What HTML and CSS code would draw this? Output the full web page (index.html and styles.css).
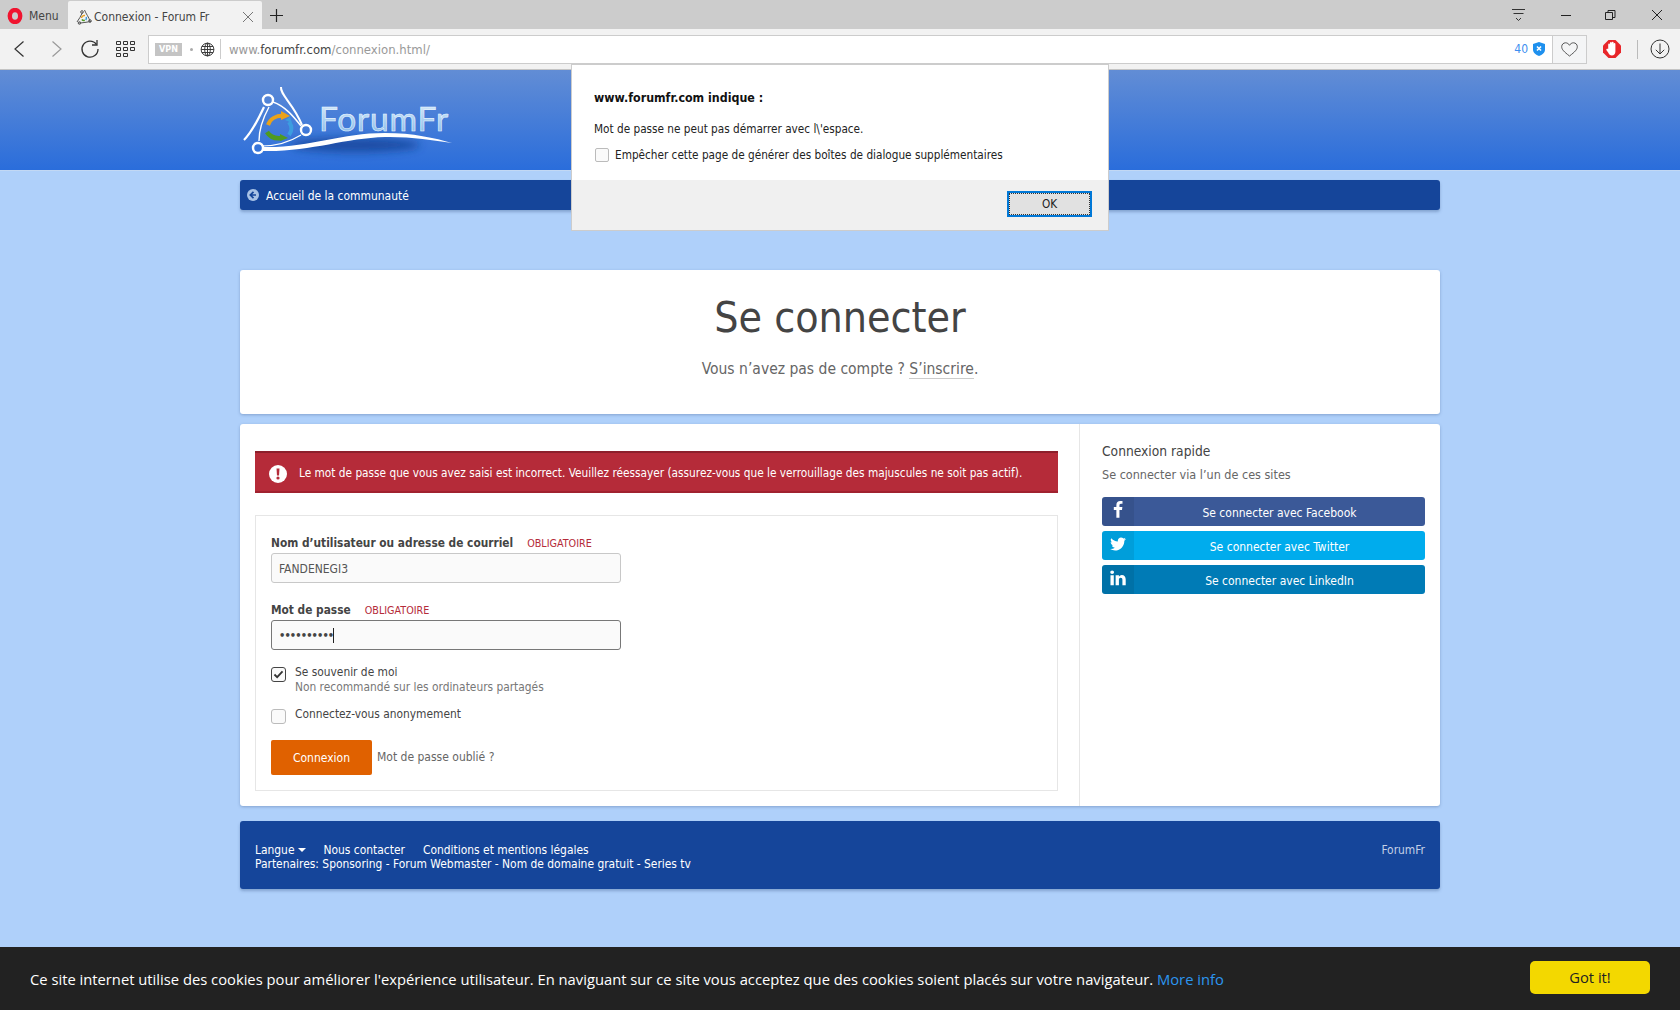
FILE: index.html
```html
<!DOCTYPE html>
<html lang="fr">
<head>
<meta charset="utf-8">
<title>Connexion - Forum Fr</title>
<link rel="stylesheet" href="styles.css">
</head>
<body>
<div class="browser">
  <div class="tabstrip">
    <div class="menu">
      <svg class="opera" viewBox="0 0 16 16"><ellipse cx="8" cy="8" rx="5.200" ry="6" fill="none" stroke="#f0142f" stroke-width="4.400"/></svg>
      <span>Menu</span>
    </div>
    <div class="tab">
      <svg class="favicon" viewBox="0 0 16 16"><g fill="none" stroke="#555" stroke-width="1"><path d="M8.500 1C10 5 13 8 14 12.500M6.500 3.500C5 7 3 10 1 13M2.500 14C7 14 11 13 15 12.500"/><circle cx="6" cy="3" r="1.300"/><circle cx="14" cy="12" r="1.300"/><circle cx="3.500" cy="14" r="1.300"/></g><path d="M5.500 9a3 3 0 0 1 3.500-2.500" fill="none" stroke="#e8a020" stroke-width="1.500"/><path d="M10.200 8a3 3 0 0 1-.5 3" fill="none" stroke="#3c9de0" stroke-width="1.500"/><path d="M5.800 10.500a3 3 0 0 0 3 .8" fill="none" stroke="#4f9a20" stroke-width="1.500"/></svg>
      <span class="tab-title">Connexion - Forum Fr</span>
      <svg class="tab-close" viewBox="0 0 10 10"><path d="M0 0 10 10M10 0 0 10" stroke="#777" stroke-width="1"/></svg>
    </div>
    <svg class="newtab" viewBox="0 0 13 13"><path d="M6.500 0v13M0 6.500h13" stroke="#222" stroke-width="1.200"/></svg>
    <div class="winctl">
      <svg class="ctl ctl-filter" viewBox="0 0 14 14"><path d="M0 1.500h13M1.500 5.500h10M4 10l2.500 2.500L9 10" fill="none" stroke="#333" stroke-width="1"/></svg>
      <svg class="ctl" viewBox="0 0 14 14"><path d="M2 7.500h10" stroke="#222" stroke-width="1"/></svg>
      <svg class="ctl ctl-restore" viewBox="0 0 14 14"><path d="M2.500 4.500h7v7h-7zM5 4.500V2.500h7v7h-2.500" fill="none" stroke="#222" stroke-width="1"/></svg>
      <svg class="ctl" viewBox="0 0 14 14"><path d="M2 2 12 12M12 2 2 12" stroke="#222" stroke-width="1"/></svg>
    </div>
  </div>
  <div class="toolbar">
    <div class="navbtns">
      <svg class="nav-ic" viewBox="0 0 12 18"><path d="M10.500 1.500 2 9l8.500 7.500" fill="none" stroke="#333" stroke-width="1.200"/></svg>
      <svg class="nav-ic" viewBox="0 0 12 18"><path d="M1.500 1.500 10 9l-8.500 7.500" fill="none" stroke="#999" stroke-width="1.200"/></svg>
      <svg class="nav-reload" viewBox="0 0 20 20"><path d="M16.500 5.500A8 8 0 1 0 18 10" fill="none" stroke="#333" stroke-width="1.300"/><path d="M17 1v5h-5" fill="none" stroke="#333" stroke-width="1.300"/></svg>
      <svg class="nav-dial" viewBox="0 0 20 17"><path d="M.5.500h4v3h-4zM7.500.500h4v3h-4zM14.500.500h4v3h-4zM.5 6.500h4v3h-4zM7.500 6.500h4v3h-4zM14.500 6.500h4v3h-4zM.5 12.500h4v3h-4zM7.500 12.500h4v3h-4z" fill="none" stroke="#333" stroke-width="1"/></svg>
    </div>
    <div class="addr">
      <span class="vpn">VPN</span>
      <span class="dot"></span>
      <svg class="globe" viewBox="0 0 16 16"><g fill="none" stroke="#333" stroke-width="1"><circle cx="8" cy="8" r="6.800"/><ellipse cx="8" cy="8" rx="3" ry="6.800"/><path d="M1.200 8h13.600M2 4.800h12M2 11.200h12M8 1.200v13.600"/></g></svg>
      <span class="url"><span class="host">www.</span><span class="domain">forumfr.com</span><span class="host">/connexion.html/</span></span>
      <span class="count">40</span>
      <svg class="shield" viewBox="0 0 13 15"><path d="M6.500 0 13 2v6c0 3.500-3 5.800-6.500 7C3 13.800 0 11.500 0 8V2Z" fill="#1e90ee"/><path d="M4.300 4.800 8.700 9.200M8.700 4.800 4.300 9.200" stroke="#fff" stroke-width="1.700"/></svg>
      <span class="fav">
        <svg class="heart" viewBox="0 0 17 15"><path d="M8.500 14C3 9.800.7 7.500.7 4.700.7 2.500 2.400.8 4.500.8c1.700 0 3.200 1 4 2.500.8-1.500 2.300-2.500 4-2.500 2.100 0 3.800 1.700 3.800 3.900 0 2.800-2.300 5.100-7.800 9.300Z" fill="none" stroke="#555" stroke-width="1"/></svg>
      </span>
    </div>
    <svg class="adblock" viewBox="0 0 18 18"><path d="M5.500 0h7L18 5.500v7L12.500 18h-7L0 12.500v-7Z" fill="#e8262a"/><path d="M5.200 9V4.500a.9.900 0 0 1 1.800 0V3a.9.900 0 0 1 1.800 0v-.3a.9.900 0 0 1 1.800 0V4a.9.900 0 0 1 1.800 0v7.500c0 2.500-1.600 4-3.500 4-1.800 0-2.800-1-3.600-2.800L3.300 10c-.4-1 1.200-1.800 1.900-1Z" fill="#fff"/></svg>
    <span class="tsep"></span>
    <svg class="download" viewBox="0 0 20 20"><circle cx="10" cy="10" r="9" fill="none" stroke="#333" stroke-width="1"/><path d="M10 4.500V15M5.800 10.800 10 15l4.200-4.200" fill="none" stroke="#333" stroke-width="1"/></svg>
  </div>
</div>

<header class="hero">
  <div class="wrap">
    <svg class="logo" viewBox="0 0 230 90">
      <defs>
        <linearGradient id="lg" x1="0" y1="0" x2="0" y2="1"><stop offset="0" stop-color="#e2f1fb"/><stop offset="1" stop-color="#7db6e8"/></linearGradient>
        <filter id="bl" x="-30%" y="-80%" width="160%" height="260%"><feGaussianBlur stdDeviation="4"/></filter>
      </defs>
      <ellipse cx="120" cy="65" rx="65" ry="7" fill="#12449a" opacity=".85" filter="url(#bl)"/>
      <g fill="none" stroke="#fff">
        <circle cx="33" cy="20" r="5" stroke-width="2.400"/>
        <circle cx="71" cy="50" r="5" stroke-width="2.400"/>
        <circle cx="23" cy="68" r="5" stroke-width="2.400"/>
        <path d="M46 7c-1 8 12 16 21 38" stroke-width="2"/>
        <path d="M29 27C23 40 17 52 9 60" stroke-width="2.200"/>
        <path d="M38 22C50 26 59 37 66 46" stroke-width="1.400"/>
        <path d="M24 61C24 48 28 38 34 27" stroke-width="1.400"/>
        <path d="M27 66c14 0 26-3 39-11" stroke-width="1.200"/>
      </g>
      <path d="M28 67C75 68 105 53 150 53c28 0 50 5 67 10-20-3-42-6.500-67-6C110 58 75 72 28 71Z" fill="#fff"/>
      <path d="M33 45c2-6 8-10 17-9" fill="none" stroke="#e9a21a" stroke-width="4"/>
      <path d="M46 31l9 5-9 4Z" fill="#e9a21a"/>
      <path d="M54 42c3 4 3 9 0 13" fill="none" stroke="#3c9de0" stroke-width="4"/>
      <path d="M50 40l5-3 2 6Z" fill="#3c9de0"/>
      <path d="M32 52c3 5 8 7 15 6" fill="none" stroke="#4f9a20" stroke-width="4.500"/>
      <path d="M45 54l8 4-8 3Z" fill="#4f9a20"/>
      <text x="84" y="51" class="logo-text" fill="url(#lg)" stroke="#e9f5ff" stroke-width=".6">ForumFr</text>
    </svg>
  </div>
</header>

<main class="wrap page">
  <nav class="crumb">
    <svg class="crumb-ic" viewBox="0 0 12 12"><circle cx="6" cy="6" r="6" fill="#a8c2e6"/><path d="M6.500 2.800 3.300 6l3.200 3.200M3.500 6h5.500" fill="none" stroke="#15459a" stroke-width="1.700"/></svg>
    <span class="crumb-txt">Accueil de la communauté</span>
  </nav>

  <section class="card title-card">
    <h1>Se connecter</h1>
    <p class="subtitle">Vous n’avez pas de compte ? <a class="signup">S’inscrire</a>.</p>
  </section>

  <section class="card login">
    <div class="login-main">
      <div class="alert">
        <svg class="alert-ic" viewBox="0 0 18 18"><circle cx="9" cy="9" r="9" fill="#fff"/><path d="M7.500 3.500h3l-.5 7H8Z" fill="#b52b39"/><circle cx="9" cy="13" r="1.600" fill="#b52b39"/></svg>
        <span class="alert-txt">Le mot de passe que vous avez saisi est incorrect. Veuillez réessayer (assurez-vous que le verrouillage des majuscules ne soit pas actif).</span>
      </div>
      <form class="form">
        <div class="label-row"><b>Nom d’utilisateur ou adresse de courriel</b><span class="req">OBLIGATOIRE</span></div>
        <div class="field">FANDENEGI3</div>
        <div class="label-row second"><b>Mot de passe</b><span class="req">OBLIGATOIRE</span></div>
        <div class="field focus"><span class="dots">••••••••••</span><span class="caret"></span></div>
        <div class="check first">
          <span class="box on"><svg viewBox="0 0 12 10"><path d="M1.500 5 4.500 8 10.500 1.500" fill="none" stroke="#333" stroke-width="2"/></svg></span>
          <div><div class="check-label">Se souvenir de moi</div><div class="check-sub">Non recommandé sur les ordinateurs partagés</div></div>
        </div>
        <div class="check">
          <span class="box"></span>
          <div class="check-label anon">Connectez-vous anonymement</div>
        </div>
        <div class="actions">
          <span class="btn-login">Connexion</span>
          <a class="forgot">Mot de passe oublié ?</a>
        </div>
      </form>
    </div>
    <aside class="login-side">
      <h2>Connexion rapide</h2>
      <p>Se connecter via l’un de ces sites</p>
      <a class="social fb"><span class="s-ic"><svg viewBox="0 0 1792 1792"><path d="M1343 12v264h-157q-86 0-116 36t-30 108v189h293l-39 296h-254v759h-306v-759h-255v-296h255v-218q0-186 104-288.500t277-102.500q147 0 228 12z" fill="#fff"/></svg></span><span class="s-txt">Se connecter avec Facebook</span></a>
      <a class="social tw"><span class="s-ic"><svg viewBox="0 0 1792 1792"><path d="M1684 408q-67 98-162 167 1 14 1 42 0 130-38 259.500t-115.500 248.500-184.500 210.500-258 146-323 54.500q-271 0-496-145 35 4 78 4 225 0 401-138-105-2-188-64.500t-114-159.500q33 5 61 5 43 0 85-11-112-23-185.500-111.500t-73.500-205.500v-4q68 38 146 41-66-44-105-115t-39-154q0-88 44-163 121 149 294.500 238.500t371.500 99.500q-8-38-8-74 0-134 94.500-228.500t228.500-94.500q140 0 236 102 109-21 205-78-37 115-142 178 91-10 184-50z" fill="#fff"/></svg></span><span class="s-txt">Se connecter avec Twitter</span></a>
      <a class="social li"><span class="s-ic"><svg viewBox="0 0 1792 1792"><path d="M477 625v991h-330v-991h330zm21-306q1 73-50.500 122t-135.500 49h-2q-82 0-132-49t-50-122q0-74 51.500-122.500t134.500-48.500 133 48.500 51 122.500zm1166 729v568h-329v-530q0-105-40.500-164.500t-126.500-59.500q-63 0-105.500 34.500t-63.500 85.500q-11 30-11 81v553h-329q2-399 2-647t-1-296l-1-48h329v144h-2q20-32 41-56t56.500-52 87-43.500 114.500-15.500q171 0 275 113.500t104 332.500z" fill="#fff"/></svg></span><span class="s-txt">Se connecter avec LinkedIn</span></a>
    </aside>
  </section>

  <footer class="foot">
    <div>
      <div class="foot-links"><span class="lang">Langue<i class="caret-down"></i></span><span>Nous contacter</span><span>Conditions et mentions légales</span></div>
      <div>Partenaires: Sponsoring - Forum Webmaster - Nom de domaine gratuit - Series tv</div>
    </div>
    <span class="brand">ForumFr</span>
  </footer>
</main>

<div class="dialog">
  <div class="dlg-body">
    <div class="dlg-title">www.forumfr.com indique :</div>
    <div class="dlg-msg">Mot de passe ne peut pas démarrer avec l\'espace.</div>
    <div class="dlg-check"><span class="dlg-box"></span><span>Empêcher cette page de générer des boîtes de dialogue supplémentaires</span></div>
  </div>
  <div class="dlg-foot"><button class="dlg-ok" type="button">OK</button></div>
</div>

<div class="cookie">
  <span class="cookie-text">Ce site internet utilise des cookies pour améliorer l'expérience utilisateur. En naviguant sur ce site vous acceptez que des cookies soient placés sur votre navigateur. <a class="more">More info</a></span>
  <span class="gotit">Got it!</span>
</div>
</body>
</html>
```
FILE: styles.css
```css
* { box-sizing: border-box; }
html, body { margin: 0; height: 1010px; overflow: hidden; }
body {
  position: relative;
  background: #afd0fa;
  color: #444;
  font-family: "DejaVu Sans", sans-serif;
  font-stretch: condensed;
  font-size: 12px;
}

/* browser chrome */
.tabstrip { height: 29px; background: #ccc; display: flex; align-items: flex-end; }
.menu { width: 68px; height: 29px; display: flex; align-items: center; padding: 3px 0 0 7px; gap: 6px; font-size: 12px; color: #444; }
.opera { width: 16px; height: 16px; }
.tab { width: 194px; height: 28px; background: #f2f2f2; border-radius: 2px 2px 0 0; display: flex; align-items: center; padding: 3px 9px 0 8px; color: #444; }
.favicon { width: 16px; height: 16px; flex: none; margin-right: 2px; }
.tab-title { flex: 1; white-space: nowrap; }
.tab-close { width: 10px; height: 10px; }
.newtab { width: 13px; height: 13px; margin: 0 0 7px 8px; }
.winctl { margin-left: auto; height: 29px; display: flex; align-items: center; padding-right: 16px; gap: 30px; }
.ctl { width: 14px; height: 14px; }
.ctl-filter { margin-right: 3px; }
.ctl-restore { margin-right: 3px; }
.toolbar { height: 41px; background: #f2f2f2; border-bottom: 1px solid #c4c4c4; display: flex; align-items: center; }
.navbtns { width: 148px; display: flex; align-items: center; padding-left: 13px; flex: none; }
.nav-ic { width: 12px; height: 18px; margin-right: 26px; }
.nav-reload { width: 20px; height: 20px; margin-left: -9px; margin-right: 16px; }
.nav-dial { width: 20px; height: 17px; }
.addr { width: 1439px; height: 29px; background: #fff; border: 1px solid #ccc; display: flex; align-items: center; padding-left: 6px; flex: none; }
.vpn { background: #c4c4c4; color: #fff; font-weight: 700; font-size: 9px; width: 27px; height: 13px; line-height: 13px; text-align: center; }
.dot { width: 3px; height: 3px; border-radius: 50%; background: #aaa; margin: 0 7px 0 8px; }
.globe { width: 15px; height: 15px; }
.url { margin-left: 5px; padding-left: 8px; border-left: 1px solid #ccc; height: 20px; line-height: 21px; font-size: 13px; flex: 1; }
.host { color: #999; }
.domain { color: #444; }
.count { color: #3d8ff0; font-size: 12px; margin-right: 5px; }
.shield { width: 12px; height: 14px; margin-right: 7px; }
.fav { width: 34px; height: 27px; background: #f4f5f6; border-left: 1px solid #ccc; display: flex; align-items: center; justify-content: center; }
.heart { width: 17px; height: 15px; }
.adblock { width: 18px; height: 18px; margin-left: 16px; flex: none; }
.tsep { width: 1px; height: 19px; background: #bbb; margin-left: 16px; }
.download { width: 20px; height: 20px; margin-left: 12px; }

/* page */
.wrap { width: 1200px; margin: 0 auto; }
.hero { height: 101px; padding-top: 10px; background: linear-gradient(#628dd5, #2a6ddb); border-bottom: 1px solid #c2d8f4; }
.logo { display: block; width: 230px; height: 90px; margin: 0 0 0 -5px; }
.logo-text { font-family: "Lato", sans-serif; font-size: 33.500px; letter-spacing: .8px; }
.crumb { height: 30px; margin-top: 9px; background: #15459a; border-radius: 3px; box-shadow: 0 2px 3px rgba(50,80,130,.35); display: flex; align-items: center; gap: 7px; padding-left: 7px; color: #fff; }
.crumb-txt { padding-top: 1px; font-size: 11.950px; }
.crumb-ic { width: 12px; height: 12px; }
.card { background: #fff; border-radius: 3px; box-shadow: 0 1px 3px rgba(50,80,130,.35); }
.title-card { height: 144px; margin-top: 60px; text-align: center; padding-top: 20px; }
h1 { margin: 0; font-size: 42.500px; line-height: 56px; font-weight: 400; color: #444; }
.subtitle { margin: 12px 0 0; font-size: 15.500px; line-height: 22px; color: #666; }
.signup { border-bottom: 1px solid #ccc; }
.login { height: 382px; margin-top: 10px; display: flex; }
.login-main { width: 840px; border-right: 1px solid #e6e6e6; padding: 27px 21px 0 15px; }
.alert { height: 42px; background: #b52b39; border-top: 2px solid #8c1f2b; border-bottom: 2px solid #a0222f; display: flex; align-items: center; padding-left: 14px; gap: 12px; color: #fff; font-size: 11.760px; white-space: nowrap; }
.alert-txt { padding-top: 1px; }
.alert-ic { width: 18px; height: 18px; flex: none; margin: 3px 0 0 0; }
.form { height: 276px; margin-top: 22px; border: 1px solid #e6e6e6; padding: 17px 15px 0; }
.label-row { height: 18px; padding-top: 2px; display: flex; align-items: center; gap: 13px; font-size: 11.800px; color: #444; }
.label-row b { font-weight: 700; }
.label-row.second { margin-top: 17px; }
.req { color: #b52b39; font-size: 10.700px; margin-left: 1px; }
.field { width: 350px; height: 30px; margin-top: 2px; padding-top: 1px; background: #fafafa; border: 1px solid #c8c8c8; border-radius: 3px; display: flex; align-items: center; padding-left: 7px; color: #555; }
.field.focus { border-color: #777; }
.dots { letter-spacing: -.9px; color: #444; font-size: 11px; font-weight: 700; }
.caret { width: 1px; height: 15px; background: #222; }
.check { display: flex; gap: 9px; margin-top: 11px; font-size: 11.850px; line-height: 15px; }
.check.first { margin-top: 15px; }
.box { width: 15px; height: 15px; margin-top: 3px; border: 1px solid #bbb; border-radius: 3px; background: #fafafa; display: flex; align-items: center; justify-content: center; flex: none; }
.box.on { border-color: #444; margin-top: 2px; }
.box svg { width: 11px; height: 9px; }
.check-label { color: #444; }
.check-label.anon { padding-top: 1px; }
.check-sub { color: #777; }
.actions { display: flex; align-items: center; gap: 5px; margin-top: 16px; }
.btn-login { width: 101px; height: 35px; line-height: 36px; background: #e06100; color: #fff; border-radius: 2px; text-align: center; }
.forgot { color: #666; margin-top: -1px; }
.login-side { flex: 1; padding: 17px 15px 0 22px; }
h2 { margin: 0; font-size: 13.700px; line-height: 20px; font-weight: 400; color: #444; }
.login-side p { margin: 6px 0 14px; line-height: 16px; font-size: 12.500px; color: #666; }
.social { height: 29px; margin-bottom: 5px; display: flex; border-radius: 3px; color: #fff; overflow: hidden; }
.s-ic { width: 32px; display: flex; align-items: center; justify-content: center; background: rgba(0,0,0,.08); padding-bottom: 3px; }
.s-ic svg { width: 18px; height: 18px; }
.s-txt { flex: 1; text-align: center; line-height: 33px; }
.fb { background: #3b5998; }
.tw { background: #00aced; }
.li { background: #007bb6; }
.foot { height: 68px; margin-top: 15px; background: #15459a; border-radius: 3px; box-shadow: 0 2px 3px rgba(50,80,130,.35); display: flex; justify-content: space-between; padding: 22px 15px 0; color: #fff; font-size: 11.920px; line-height: 14px; }
.foot-links { display: flex; gap: 18px; }
.lang { display: inline-flex; align-items: center; gap: 3px; margin-top: -1px; }
.caret-down { width: 0; height: 0; border: 4px solid transparent; border-top-color: #fff; border-bottom: 0; }
.brand { color: #c3d0e6; }

/* overlays */
.dialog { position: absolute; left: 571px; top: 64px; width: 538px; height: 167px; background: #fff; border: 1px solid #ccc; display: flex; flex-direction: column; color: #222; font-size: 11.700px; }
.dlg-body { height: 115px; padding: 25px 22px 0; }
.dlg-title { font-weight: 700; font-size: 12.350px; line-height: 17px; color: #111; }
.dlg-msg { margin-top: 14px; line-height: 16px; }
.dlg-check { display: flex; align-items: center; gap: 6px; margin-top: 10px; line-height: 16px; }
.dlg-box { width: 14px; height: 14px; margin-left: 1px; border: 1px solid #bbb; border-radius: 2px; background: #fafafa; }
.dlg-foot { flex: 1; background: #f0f0f0; display: flex; justify-content: flex-end; align-items: flex-start; padding: 11px 16px 0 0; }
.dlg-ok { width: 85px; height: 26px; background: #e1e1e1; border: 2px solid #0078d7; outline: 1px dotted #333; outline-offset: -3px; font: inherit; color: #222; padding: 0; }
.cookie { position: absolute; left: 0; right: 0; bottom: 0; height: 63px; background: #222; color: #fff; display: flex; align-items: center; justify-content: space-between; padding: 0 30px 0 30px; font-family: "Open Sans", sans-serif; font-stretch: normal; font-size: 14.750px; }
.more { color: #2c96f0; }
.gotit { width: 120px; height: 33px; margin-top: -3px; background: #f3d800; color: #222; border-radius: 5px; text-align: center; line-height: 33px; }
```
